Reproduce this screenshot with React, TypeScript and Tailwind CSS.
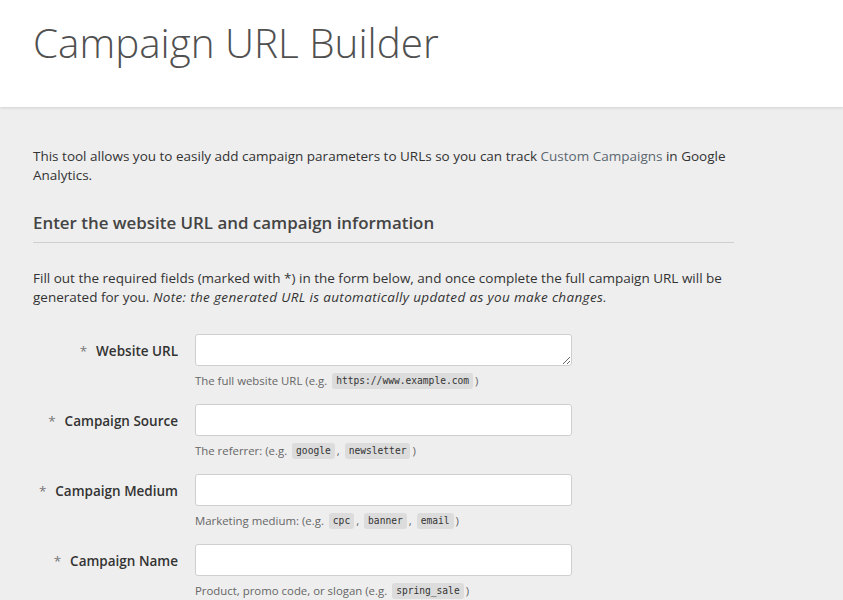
import React from "react";

const Code = ({ children }: { children: React.ReactNode }) => (
  <code className="bg-[#dcdcdc] text-[#333] rounded-[3px] px-[4px] py-[1px] text-[9.6px] leading-[14px] mx-[2px] inline-block" style={{ fontFamily: '"DejaVu Sans Mono", "Liberation Mono", monospace' }}>
    {children}
  </code>
);

function Row({ label, help, textarea }: { label: string; help: React.ReactNode; textarea?: boolean }) {
  return (
    <div className="flex mb-[14px]">
      <div className="w-[145px] h-[32px] flex items-center justify-end pt-[2px] text-[13.5px] font-semibold text-[#333]">
        <span className="text-[#777] font-normal mr-[9px]">*</span>
        {label}
      </div>
      <div className="ml-[17px] w-[377px]">
        {textarea ? (
          <textarea className="block w-full h-[32px] min-h-[32px] bg-white border border-[#cfcfcf] rounded-[3px] resize-y outline-none" rows={1} />
        ) : (
          <input className="block w-full h-[32px] bg-white border border-[#cfcfcf] rounded-[3px] outline-none" />
        )}
        <div className="mt-[6px] h-[18px] flex items-center text-[11.4px] text-[#666]">{help}</div>
      </div>
    </div>
  );
}

export default function App() {
  return (
    <div className="min-h-[600px] bg-[#eeeeee]" style={{ fontFamily: '"Open Sans", "Noto Sans", sans-serif' }}>
      <header className="bg-white h-[107px] px-[33px] pt-[18px] shadow-[0_1px_3px_rgba(0,0,0,0.12)] relative">
        <h1 className="text-[40.4px] leading-[50px] font-light text-[#505050]">Campaign URL Builder</h1>
      </header>
      <main className="px-[33px] pt-[40px]">
        <div className="w-[701px]">
          <p className="text-[13.5px] leading-[19px] text-[#333]">
            This tool allows you to easily add campaign parameters to URLs so you can track{" "}
            <a className="text-[#5b6770]">Custom Campaigns</a> in Google Analytics.
          </p>
          <h2 className="mt-[26px] text-[16.9px] leading-[24px] font-semibold text-[#444] pb-[7px] border-b border-[#cfcfcf]">
            Enter the website URL and campaign information
          </h2>
          <p className="mt-[26px] text-[13.5px] leading-[19px] text-[#333]">
            Fill out the required fields (marked with *) in the form below, and once complete the full campaign URL will be generated for you.{" "}
            <em className="tracking-[0.35px]">Note: the generated URL is automatically updated as you make changes.</em>
          </p>
          <div className="mt-[27px]">
            <Row label="Website URL" textarea help={<>The full website URL (e.g.&nbsp;<Code>https://www.example.com</Code>)</>} />
            <Row label="Campaign Source" help={<>The referrer: (e.g.&nbsp;<Code>google</Code>,&nbsp;<Code>newsletter</Code>)</>} />
            <Row label="Campaign Medium" help={<>Marketing medium: (e.g.&nbsp;<Code>cpc</Code>,&nbsp;<Code>banner</Code>,&nbsp;<Code>email</Code>)</>} />
            <Row label="Campaign Name" help={<>Product, promo code, or slogan (e.g.&nbsp;<Code>spring_sale</Code>)</>} />
          </div>
        </div>
      </main>
    </div>
  );
}
